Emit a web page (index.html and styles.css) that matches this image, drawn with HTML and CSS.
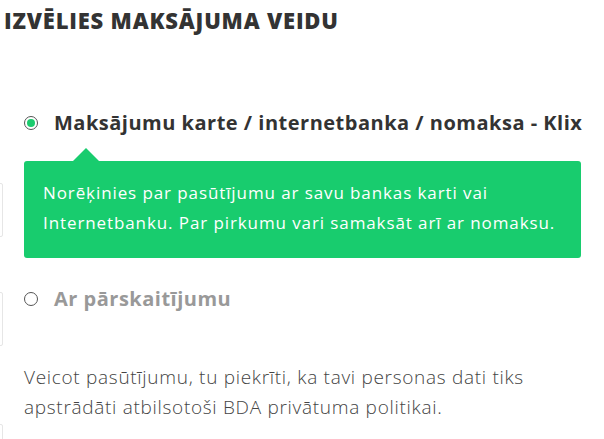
FILE: index.html
```html
<!DOCTYPE html>
<html lang="lv">
<head>
<meta charset="utf-8">
<link rel="stylesheet" href="styles.css">
</head>
<body>
<div class="page">
  <div class="ghost" aria-hidden="true">
    <div class="ghost-box g1"></div>
    <div class="ghost-box g2"></div>
    <div class="ghost-box g3"></div>
  </div>
  <h1 class="title">IZVĒLIES MAKSĀJUMA VEIDU</h1>
  <div class="options">
    <label class="option active">
      <span class="radio checked"></span>
      <span class="opt-label">Maksājumu karte / internetbanka / nomaksa - Klix</span>
    </label>
    <div class="info">
      <span class="arrow"></span>
      <p>Norēķinies par pasūtījumu ar savu bankas karti vai Internetbanku. Par pirkumu vari samaksāt arī ar nomaksu.</p>
    </div>
    <label class="option">
      <span class="radio"></span>
      <span class="opt-label muted">Ar pārskaitījumu</span>
    </label>
  </div>
  <p class="note">Veicot pasūtījumu, tu piekrīti, ka tavi personas dati tiks apstrādāti atbilsotoši BDA privātuma politikai.</p>
</div>
</body>
</html>
```
FILE: styles.css
```css
html, body { margin: 0; padding: 0; background: #fff; }
body { width: 604px; height: 439px; overflow: hidden; }
.page { position: relative; padding: 6px 0 0 4px; }
.ghost { position: absolute; left: -40px; top: 183px; width: 43px; display: flex; flex-direction: column; }
.ghost-box { border: 1px solid #e6e6e6; border-radius: 2px; height: 52px; }
.g2 { margin-top: 55px; }
.g3 { margin-top: 78px; height: 40px; }
.title {
  margin: 0;
  font-family: "Open Sans", sans-serif;
  font-weight: 800;
  font-size: 22px;
  letter-spacing: 0.8px;
  line-height: 28px;
  color: #333;
}
.options { margin: 76px 0 0 20px; width: 557px; }
.option { display: flex; align-items: center; gap: 16px; padding-left: 0; }
.radio {
  width: 14px; height: 14px; border: 1px solid #555; border-radius: 50%;
  box-sizing: border-box; display: flex; align-items: center; justify-content: center;
  flex: none;
}
.radio.checked::after { content: ""; width: 8px; height: 8px; border-radius: 50%; background: #1bcb6d; }
.opt-label {
  font-family: "Open Sans", sans-serif; font-weight: 700; font-size: 20px; letter-spacing: 0.5px; line-height: 26px; color: #333; white-space: nowrap;
}
.opt-label.muted { color: #999; }
.info {
  position: relative; margin-top: 25px; background: #18cc6e; border-radius: 3px;
  padding: 17px 19px 20px; color: #fff;
}
.arrow { position: absolute; left: 49px; top: -13px; width: 0; height: 0;
  border-left: 13px solid transparent; border-right: 13px solid transparent; border-bottom: 13px solid #18cc6e; }
.info p { margin: 0; font-family: "Open Sans", sans-serif; font-weight: 400; font-size: 17px; letter-spacing: 0.9px; line-height: 30px; }
.option + .info + .option { margin-top: 28px; }
.note {
  margin: 50px 0 0 20px; width: 560px;
  font-family: "Open Sans", sans-serif; font-weight: 300; font-size: 19px; letter-spacing: 0.7px; line-height: 30px; color: #444;
}
```
